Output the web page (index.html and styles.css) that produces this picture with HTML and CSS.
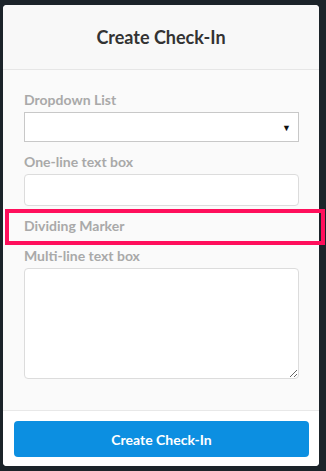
FILE: index.html
```html
<!DOCTYPE html>
<html>
<head>
<meta charset="utf-8">
<link rel="stylesheet" href="styles.css">
</head>
<body>
<div class="backdrop">
  <div class="modal">
    <div class="modal-header">
      <h1 class="modal-title">Create Check-In</h1>
    </div>
    <div class="modal-body">
      <div class="field">
        <label class="field-label">Dropdown List</label>
        <div class="select-box"><span class="select-arrow">&#9660;</span></div>
      </div>
      <div class="field">
        <label class="field-label">One-line text box</label>
        <input class="text-input" type="text">
      </div>
      <div class="field">
        <div class="field-label divider-label">Dividing Marker</div>
      </div>
      <div class="field">
        <label class="field-label">Multi-line text box</label>
        <textarea class="text-area"></textarea>
      </div>
    </div>
    <div class="modal-footer">
      <button class="btn-primary">Create Check-In</button>
    </div>
  </div>
  <div class="highlight"></div>
</div>
</body>
</html>
```
FILE: styles.css
```css
html, body {
  margin: 0;
  padding: 0;
}
body {
  width: 326px;
  height: 471px;
  background: #1b2329;
  font-family: Lato, "Open Sans", sans-serif;
  overflow: hidden;
}
.backdrop {
  position: relative;
  width: 326px;
  height: 471px;
  padding: 5px 0 0 3px;
  box-sizing: border-box;
}
.modal {
  width: 316px;
  height: 461px;
  background: #fafafa;
  border-radius: 4px;
  display: flex;
  flex-direction: column;
  overflow: hidden;
}
.modal-header {
  height: 64px;
  display: flex;
  align-items: center;
  justify-content: center;
  border-bottom: 1px solid #e6e6e6;
  background: #f8f8f8;
}
.modal-title {
  margin: 0;
  font-size: 18px;
  font-weight: 700;
  color: #333;
}
.modal-body {
  padding: 20px 20px 0 21px;
  flex: 1;
  display: flex;
  flex-direction: column;
  gap: 10px;
}
.field {
  display: flex;
  flex-direction: column;
  gap: 2px;
}
.field-label {
  display: block;
  height: 20px;
  line-height: 20px;
  font-size: 14px;
  font-weight: 700;
  color: #a9a9a9;
}
.select-box {
  height: 30px;
  box-sizing: border-box;
  border: 1px solid #c8c8c8;
  background: #fff;
  position: relative;
  display: flex;
  align-items: center;
  justify-content: flex-end;
  padding-right: 7px;
}
.select-arrow {
  font-size: 9px;
  color: #111;
  line-height: 1;
}
.text-input {
  height: 32px;
  box-sizing: border-box;
  border: 1px solid #dcdcdc;
  border-radius: 4px;
  background: #fff;
  margin: 0;
  outline: none;
}
.text-area {
  height: 111px;
  box-sizing: border-box;
  border: 1px solid #dcdcdc;
  border-radius: 4px;
  background: #fff;
  margin: 0;
  resize: both;
  outline: none;
}
.modal-footer {
  border-top: 1px solid #e8e8e8;
  background: #fff;
  padding: 10px 10px 9px 11px;
}
.btn-primary {
  display: block;
  width: 295px;
  height: 36px;
  border: none;
  border-radius: 4px;
  background: #0c8fe1;
  color: #fff;
  font-family: Lato, "Open Sans", sans-serif;
  font-size: 14px;
  font-weight: 700;
  padding: 0;
}
.highlight {
  position: absolute;
  left: 5px;
  top: 209px;
  width: 320px;
  height: 36px;
  box-sizing: border-box;
  border: 4px solid #ff0f5c;
}
```
